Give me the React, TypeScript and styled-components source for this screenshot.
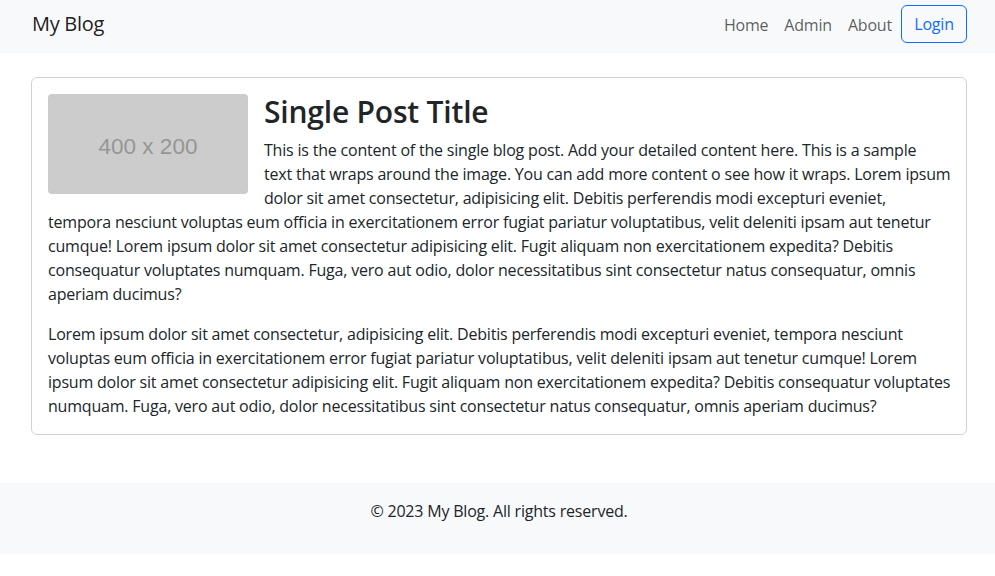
import React from "react";
import styled, { createGlobalStyle } from "styled-components";

const GlobalStyle = createGlobalStyle`
  * { box-sizing: border-box; }
  body {
    margin: 0;
    font-family: "Open Sans", "Noto Sans", sans-serif;
    font-size: 16px;
    line-height: 1.5;
    letter-spacing: -0.2px;
    color: #212529;
    background: #fff;
  }
`;

const Container = styled.div`
  width: 100%;
  padding: 0 28px 0 31px;
`;

const Navbar = styled.nav`
  background: #f8f9fa;
  height: 53px;
  padding-top: 5px;
`;

const NavInner = styled(Container)`
  display: flex;
  align-items: center;
  justify-content: space-between;
  height: 38px;
`;

const Brand = styled.a`
  font-size: 20px;
  line-height: 30px;
  color: rgba(0, 0, 0, 0.9);
  text-decoration: none;
  padding-left: 1px;
  letter-spacing: -0.3px;
`;

const NavList = styled.div`
  display: flex;
  align-items: center;
`;

const NavLink = styled.a`
  color: rgba(0, 0, 0, 0.65);
  text-decoration: none;
  padding: 9px 8px 7px;
  line-height: 24px;
`;

const LoginButton = styled.button`
  font-family: inherit;
  font-size: 16px;
  letter-spacing: -0.2px;
  line-height: 24px;
  color: #0d6efd;
  background: transparent;
  border: 1px solid #0d6efd;
  border-radius: 6px;
  padding: 6px 12px;
  height: 38px;
  width: 66px;
  margin-left: 1px;
`;

const Main = styled(Container)`
  margin-top: 24px;
`;

const Card = styled.article`
  border: 1px solid rgba(0, 0, 0, 0.175);
  border-radius: 6px;
  padding: 16px;
  display: flow-root;
`;

const Placeholder = styled.div`
  float: left;
  width: 200px;
  height: 100px;
  margin-right: 16px;
  padding-top: 5px;
  background: #cccccc;
  border-radius: 4px;
  display: flex;
  align-items: center;
  justify-content: center;
  font-family: "Liberation Sans", Arial, sans-serif;
  font-size: 22.5px;
  letter-spacing: 0;
  color: #969696;
`;

const Title = styled.h2`
  margin: 0 0 8px;
  font-size: 30px;
  font-weight: 600;
  line-height: 36px;
  letter-spacing: -0.2px;
`;

const Paragraph = styled.p`
  margin: 0 0 16px;
  white-space: nowrap;
  &:last-child {
    margin-bottom: 0;
  }
`;

const Footer = styled.footer`
  margin-top: 48px;
  background: #f8f9fa;
  padding: 16px 0 31px;
`;

const FooterText = styled.p`
  margin: 0;
  text-align: center;
`;

const p1 = [
  "This is the content of the single blog post. Add your detailed content here. This is a sample",
  "text that wraps around the image. You can add more content o see how it wraps. Lorem ipsum",
  "dolor sit amet consectetur, adipisicing elit. Debitis perferendis modi excepturi eveniet,",
  "tempora nesciunt voluptas eum officia in exercitationem error fugiat pariatur voluptatibus, velit deleniti ipsam aut tenetur",
  "cumque! Lorem ipsum dolor sit amet consectetur adipisicing elit. Fugit aliquam non exercitationem expedita? Debitis",
  "consequatur voluptates numquam. Fuga, vero aut odio, dolor necessitatibus sint consectetur natus consequatur, omnis",
  "aperiam ducimus?",
];

const p2 = [
  "Lorem ipsum dolor sit amet consectetur, adipisicing elit. Debitis perferendis modi excepturi eveniet, tempora nesciunt",
  "voluptas eum officia in exercitationem error fugiat pariatur voluptatibus, velit deleniti ipsam aut tenetur cumque! Lorem",
  "ipsum dolor sit amet consectetur adipisicing elit. Fugit aliquam non exercitationem expedita? Debitis consequatur voluptates",
  "numquam. Fuga, vero aut odio, dolor necessitatibus sint consectetur natus consequatur, omnis aperiam ducimus?",
];

function Lines({ lines }: { lines: string[] }) {
  return (
    <Paragraph>
      {lines.map((l, i) => (
        <React.Fragment key={i}>
          {l}
          {i < lines.length - 1 && <br />}
        </React.Fragment>
      ))}
    </Paragraph>
  );
}

export default function App() {
  return (
    <>
      <GlobalStyle />
      <Navbar>
        <NavInner>
          <Brand href="#">My Blog</Brand>
          <NavList>
            <NavLink href="#">Home</NavLink>
            <NavLink href="#">Admin</NavLink>
            <NavLink href="#">About</NavLink>
            <LoginButton>Login</LoginButton>
          </NavList>
        </NavInner>
      </Navbar>
      <Main>
        <Card>
          <Placeholder>400 x 200</Placeholder>
          <Title>Single Post Title</Title>
          <Lines lines={p1} />
          <Lines lines={p2} />
        </Card>
      </Main>
      <Footer>
        <Container>
          <FooterText>© 2023 My Blog. All rights reserved.</FooterText>
        </Container>
      </Footer>
    </>
  );
}
